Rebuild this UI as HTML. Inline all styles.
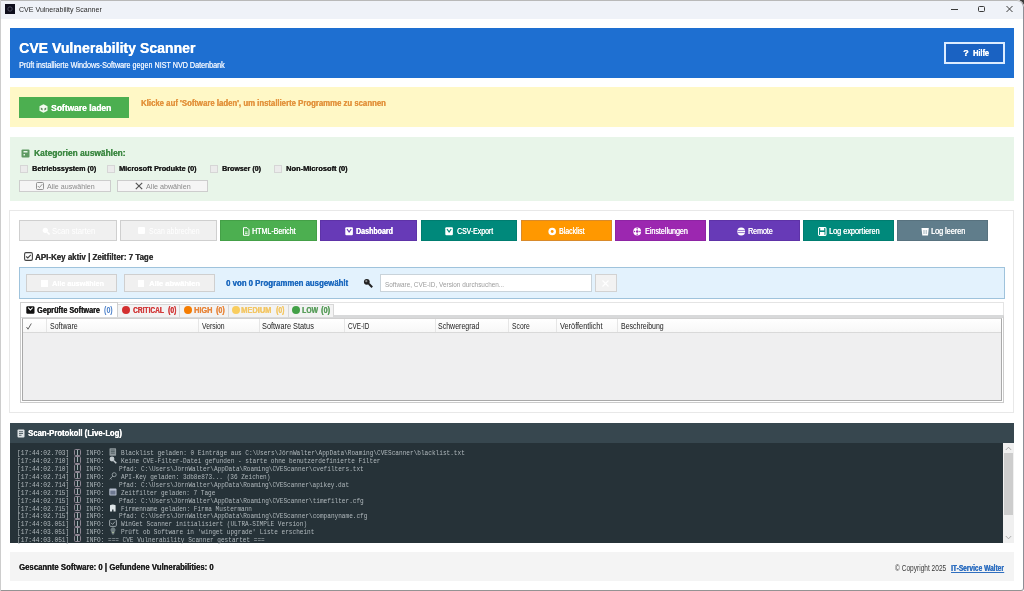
<!DOCTYPE html>
<html><head><meta charset="utf-8">
<style>
*{margin:0;padding:0;box-sizing:border-box}
html,body{width:1024px;height:591px;overflow:hidden;background:#3a3a3a}
#win{position:absolute;left:0;top:0;width:1024px;height:591px;background:#fff;overflow:hidden;border-top-right-radius:7px}
#bd{position:absolute;left:0;top:0;width:1024px;height:591px;border:1px solid #cdcdcd;border-top-color:#b8b8b8;border-right:1px solid #8e8e96;border-bottom:1px solid #939393;border-bottom-right-radius:3px;border-top-right-radius:7px;pointer-events:none}
.a{position:absolute}
.t{position:absolute;white-space:pre;line-height:1;transform-origin:0 0}
.sans{font-family:"Liberation Sans",sans-serif}
.mono{font-family:"Liberation Mono",monospace}
</style></head><body>
<div id="win">
<div class="a" style="left:0px;top:0px;width:1024px;height:18.5px;background:#eff2f8"></div>
<svg class="a" style="left:5px;top:4px" width="10" height="10" viewBox="0 0 10 10"><rect width="10" height="10" fill="#0e0e1c"/><circle cx="5" cy="5" r="2.2" fill="none" stroke="#5a5a70" stroke-width="0.8"/></svg>
<div class="t sans" style="left:18.90px;top:6.00px;font-size:7.85px;color:#2a2a2a;transform:scaleX(0.8981);">CVE Vulnerability Scanner</div>
<div class="a" style="left:951px;top:9px;width:6.5px;height:1px;background:#3a3a3a"></div>
<div class="a" style="left:978px;top:6px;width:7px;height:6px;border:1px solid #3a3a3a;border-radius:1.5px"></div>
<svg class="a" style="left:1006px;top:6px" width="7" height="6" viewBox="0 0 7 6"><path d="M0.5 0 L6.5 6 M6.5 0 L0.5 6" stroke="#3a3a3a" stroke-width="1"/></svg>
<div class="a" style="left:10px;top:28px;width:1004px;height:50px;background:#1e6fd1"></div>
<div class="t sans" style="left:19.00px;top:40.00px;font-size:15.55px;font-weight:bold;text-shadow:0.3px 0 0 #ffffff;color:#ffffff;transform:scaleX(0.9058);">CVE Vulnerability Scanner</div>
<div class="t sans" style="left:19.00px;top:62.00px;font-size:8.14px;text-shadow:0.15px 0 0 #e6effc;color:#e6effc;transform:scaleX(0.8848);">Prüft installierte Windows-Software gegen NIST NVD Datenbank</div>
<div class="a" style="left:944px;top:42px;width:61px;height:22px;background:#1a62c2;border:2px solid #dcecff"></div>
<div class="t sans" style="left:963.10px;top:49.00px;font-size:8.43px;font-weight:bold;text-shadow:0.3px 0 0 #ffffff;color:#ffffff;transform:scaleX(1.1000);">?</div>
<div class="t sans" style="left:973.00px;top:49.00px;font-size:8.43px;font-weight:bold;text-shadow:0.3px 0 0 #ffffff;color:#ffffff;transform:scaleX(0.8725);">Hilfe</div>
<div class="a" style="left:10px;top:87px;width:1004px;height:40px;background:#fff8c6"></div>
<div class="a" style="left:19px;top:97px;width:110px;height:21px;background:#4caf50"></div>
<svg class="a" style="left:38.5px;top:103.8px" width="9" height="9" viewBox="0 0 9 9"><path d="M4.5 0.2 L8.5 2.3 L8.5 6.7 L4.5 8.8 L0.5 6.7 L0.5 2.3 Z" fill="#f2fbef"/><path d="M1.8 3.4 L3.6 4.4 L3.6 6.6 L1.8 5.6 Z M7.2 3.4 L5.4 4.4 L5.4 6.6 L7.2 5.6 Z" fill="#5a8a5c"/></svg>
<div class="t sans" style="left:51.30px;top:104.00px;font-size:8.87px;font-weight:bold;text-shadow:0.3px 0 0 #ffffff;color:#ffffff;transform:scaleX(0.9552);">Software laden</div>
<div class="t sans" style="left:141.30px;top:99.00px;font-size:8.72px;font-weight:bold;text-shadow:0.3px 0 0 #e3953f;color:#e3953f;transform:scaleX(0.8914);">Klicke auf 'Software laden', um installierte Programme zu scannen</div>
<div class="a" style="left:10px;top:137px;width:1004px;height:64px;background:#e8f5e9"></div>
<svg class="a" style="left:21px;top:149px" width="9" height="9" viewBox="0 0 9 9"><rect x="0.5" y="0.5" width="8" height="8" rx="1" fill="#5f9a63"/><rect x="2.5" y="2" width="4" height="1.5" fill="#e8f5e9"/><rect x="2.5" y="5" width="1.5" height="1.5" fill="#e8f5e9"/></svg>
<div class="t sans" style="left:33.90px;top:149.00px;font-size:8.43px;font-weight:bold;text-shadow:0.3px 0 0 #3f8a45;color:#3f8a45;transform:scaleX(0.9914);">Kategorien auswählen:</div>
<div class="a" style="left:20px;top:165px;width:8px;height:8px;background:#ebebeb;border:1px solid #d6d6d6"></div>
<div class="t sans" style="left:32.00px;top:165.00px;font-size:7.7px;font-weight:bold;text-shadow:0.3px 0 0 #1e1e1e;color:#1e1e1e;transform:scaleX(0.9317);">Betriebssystem (0)</div>
<div class="a" style="left:107px;top:165px;width:8px;height:8px;background:#ebebeb;border:1px solid #d6d6d6"></div>
<div class="t sans" style="left:119.40px;top:165.00px;font-size:7.7px;font-weight:bold;text-shadow:0.3px 0 0 #1e1e1e;color:#1e1e1e;transform:scaleX(0.9498);">Microsoft Produkte (0)</div>
<div class="a" style="left:210px;top:165px;width:8px;height:8px;background:#ebebeb;border:1px solid #d6d6d6"></div>
<div class="t sans" style="left:221.90px;top:165.00px;font-size:7.7px;font-weight:bold;text-shadow:0.3px 0 0 #1e1e1e;color:#1e1e1e;transform:scaleX(0.9197);">Browser (0)</div>
<div class="a" style="left:274px;top:165px;width:8px;height:8px;background:#ebebeb;border:1px solid #d6d6d6"></div>
<div class="t sans" style="left:285.80px;top:165.00px;font-size:7.7px;font-weight:bold;text-shadow:0.3px 0 0 #1e1e1e;color:#1e1e1e;transform:scaleX(0.9662);">Non-Microsoft (0)</div>
<div class="a" style="left:19px;top:180px;width:92px;height:12px;background:#f5f5f5;border:1px solid #cdcdcd"></div>
<svg class="a" style="left:36px;top:182px" width="8" height="8" viewBox="0 0 8 8"><rect x="0.5" y="0.5" width="7" height="7" rx="1" fill="none" stroke="#888" stroke-width="0.9"/><path d="M1.8 4 L3.4 5.6 L6.3 2.2" fill="none" stroke="#888" stroke-width="0.9"/></svg>
<div class="t sans" style="left:47.20px;top:183.00px;font-size:7.7px;color:#8a8a8a;transform:scaleX(0.9216);">Alle auswählen</div>
<div class="a" style="left:117px;top:180px;width:91px;height:12px;background:#f5f5f5;border:1px solid #cdcdcd"></div>
<svg class="a" style="left:135px;top:182px" width="8" height="8" viewBox="0 0 8 8"><path d="M0.8 0.8 L7.2 7.2 M7.2 0.8 L0.8 7.2" stroke="#555" stroke-width="1.2"/></svg>
<div class="t sans" style="left:145.70px;top:183.00px;font-size:7.7px;color:#8a8a8a;transform:scaleX(0.9329);">Alle abwählen</div>
<div class="a" style="left:9px;top:210px;width:1005px;height:203px;background:#fff;border:1px solid #e8e8e8"></div>
<div class="a" style="left:19px;top:220px;width:98px;height:21px;background:#f0f0f0;border:1px solid #cfcfcf"></div>
<div class="a" style="left:120px;top:220px;width:97px;height:21px;background:#f0f0f0;border:1px solid #cfcfcf"></div>
<svg class="a" style="left:42px;top:226.5px" width="8" height="8" viewBox="0 0 8 8"><circle cx="3.3" cy="3.3" r="2.6" fill="#fff"/><path d="M5 5 L7.5 7.5" stroke="#fff" stroke-width="1.6"/></svg>
<div class="t sans" style="left:52.20px;top:227.00px;font-size:8.72px;color:#ffffff;transform:scaleX(0.8859);">Scan starten</div>
<div class="a" style="left:137.5px;top:227px;width:7.5px;height:7px;background:#fff;border-radius:1px"></div>
<div class="t sans" style="left:148.90px;top:227.00px;font-size:8.72px;color:#ffffff;transform:scaleX(0.7965);">Scan abbrechen</div>
<div class="a" style="left:220px;top:220px;width:97px;height:21px;background:#4caf50;border:1px solid #44a047"></div>
<svg class="a" style="left:241.5px;top:226.5px" width="9" height="9" viewBox="0 0 9 9"><path d="M1.5 0.7 H5 L7 2.7 V8.3 H1.5 Z" fill="none" stroke="#fff" stroke-width="1"/><path d="M3 5 H5.5 M3 6.5 H5.5" stroke="#fff" stroke-width="0.8"/></svg>
<div class="t sans" style="left:252.20px;top:227.00px;font-size:8.72px;text-shadow:0.2px 0 0 #ffffff;color:#ffffff;transform:scaleX(0.8096);">HTML-Bericht</div>
<div class="a" style="left:320px;top:220px;width:97px;height:21px;background:#673ab7;border:1px solid #5e33a8"></div>
<svg class="a" style="left:345px;top:226.5px" width="9" height="9" viewBox="0 0 9 9"><rect x="0.3" y="0.3" width="7.6" height="8" rx="1" fill="#fff"/><path d="M2 2 L4.1 5 L6.2 2" fill="none" stroke="#673ab7" stroke-width="1.2"/></svg>
<div class="t sans" style="left:356.30px;top:227.00px;font-size:8.72px;font-weight:bold;text-shadow:0.3px 0 0 #ffffff;color:#ffffff;transform:scaleX(0.8095);">Dashboard</div>
<div class="a" style="left:420.5px;top:220px;width:96.7px;height:21px;background:#00897b;border:1px solid #007d70"></div>
<svg class="a" style="left:445.4px;top:226.5px" width="9" height="9" viewBox="0 0 9 9"><rect x="0.3" y="0.3" width="7.6" height="8" rx="1" fill="#fff"/><path d="M2 2 L4.1 5 L6.2 2" fill="none" stroke="#00897b" stroke-width="1.2"/></svg>
<div class="t sans" style="left:456.70px;top:227.00px;font-size:8.72px;text-shadow:0.2px 0 0 #ffffff;color:#ffffff;transform:scaleX(0.7913);">CSV-Export</div>
<div class="a" style="left:521px;top:220px;width:90.7px;height:21px;background:#ff9800;border:1px solid #d98a2a"></div>
<svg class="a" style="left:547.9px;top:226.5px" width="9" height="9" viewBox="0 0 9 9"><circle cx="4.2" cy="4.5" r="3.8" fill="#fff"/><circle cx="4.2" cy="4.5" r="1.4" fill="#ff9800"/></svg>
<div class="t sans" style="left:559.00px;top:227.00px;font-size:8.72px;text-shadow:0.2px 0 0 #ffffff;color:#ffffff;transform:scaleX(0.7987);">Blacklist</div>
<div class="a" style="left:615px;top:220px;width:90.6px;height:21px;background:#9c27b0;border:1px solid #8e24a4"></div>
<svg class="a" style="left:633.4px;top:226.5px" width="9" height="9" viewBox="0 0 9 9"><circle cx="4.2" cy="4.5" r="3.9" fill="#fff"/><circle cx="4.2" cy="4.5" r="1.3" fill="#9c27b0"/><circle cx="4.2" cy="1.8" r="0.7" fill="#9c27b0"/><circle cx="4.2" cy="7.2" r="0.7" fill="#9c27b0"/><circle cx="1.5" cy="4.5" r="0.7" fill="#9c27b0"/><circle cx="6.9" cy="4.5" r="0.7" fill="#9c27b0"/></svg>
<div class="t sans" style="left:644.80px;top:227.00px;font-size:8.72px;text-shadow:0.2px 0 0 #ffffff;color:#ffffff;transform:scaleX(0.8171);">Einstellungen</div>
<div class="a" style="left:709px;top:220px;width:91px;height:21px;background:#673ab7;border:1px solid #5e33a8"></div>
<svg class="a" style="left:737px;top:226.5px" width="9" height="9" viewBox="0 0 9 9"><circle cx="4.2" cy="4.5" r="3.9" fill="#fff"/><path d="M0.6 3.4 H7.8 M0.6 5.6 H7.8" stroke="#673ab7" stroke-width="0.7"/></svg>
<div class="t sans" style="left:747.70px;top:227.00px;font-size:8.72px;text-shadow:0.2px 0 0 #ffffff;color:#ffffff;transform:scaleX(0.8084);">Remote</div>
<div class="a" style="left:803px;top:220px;width:90.8px;height:21px;background:#00897b;border:1px solid #007d70"></div>
<svg class="a" style="left:818px;top:226.5px" width="9" height="9" viewBox="0 0 9 9"><rect x="0.5" y="0.5" width="7.5" height="8" rx="1.2" fill="none" stroke="#fff" stroke-width="1.1"/><rect x="2.2" y="0.8" width="4" height="2.6" fill="#fff"/><rect x="2" y="5" width="4.5" height="3" fill="#fff"/></svg>
<div class="t sans" style="left:829.30px;top:227.00px;font-size:8.72px;text-shadow:0.2px 0 0 #ffffff;color:#ffffff;transform:scaleX(0.8347);">Log exportieren</div>
<div class="a" style="left:897px;top:220px;width:91px;height:21px;background:#607d8b;border:1px solid #58727f"></div>
<svg class="a" style="left:921px;top:226.5px" width="9" height="9" viewBox="0 0 9 9"><path d="M0.5 1 H7.8 L7 8.5 H1.3 Z" fill="#fff"/><path d="M3 3 V7 M5.2 3 V7" stroke="#607d8b" stroke-width="0.6"/></svg>
<div class="t sans" style="left:931.25px;top:227.00px;font-size:8.72px;text-shadow:0.2px 0 0 #ffffff;color:#ffffff;transform:scaleX(0.8306);">Log leeren</div>
<svg class="a" style="left:23.5px;top:251.5px" width="9" height="9" viewBox="0 0 9 9"><rect x="0.6" y="0.6" width="7.8" height="7.8" rx="1.3" fill="none" stroke="#444" stroke-width="1.1"/><path d="M2.2 4.5 L3.8 6 L6.8 2.8" fill="none" stroke="#444" stroke-width="1.1"/></svg>
<div class="t sans" style="left:35.30px;top:253.00px;font-size:9.01px;font-weight:bold;text-shadow:0.3px 0 0 #333333;color:#333333;transform:scaleX(0.8821);">API-Key aktiv | Zeitfilter: 7 Tage</div>
<div class="a" style="left:19px;top:267px;width:986px;height:32px;background:#e3f2fd;border:1px solid #9fc3dc"></div>
<div class="a" style="left:26px;top:274px;width:91px;height:18px;background:#f0f0f0;border:1px solid #cfcfcf"></div>
<div class="a" style="left:123.5px;top:274px;width:91px;height:18px;background:#f0f0f0;border:1px solid #cfcfcf"></div>
<div class="a" style="left:41px;top:279.5px;width:6.5px;height:7px;background:#fff"></div>
<div class="t sans" style="left:52.00px;top:280.00px;font-size:7.99px;font-weight:bold;text-shadow:0.3px 0 0 #ffffff;color:#ffffff;transform:scaleX(0.8995);">Alle auswählen</div>
<div class="a" style="left:137.5px;top:280px;width:6.5px;height:6.5px;background:#fff"></div>
<div class="a" style="left:137.5px;top:280px;width:6.5px;height:6.5px;background:#fff"></div>
<div class="t sans" style="left:149.00px;top:280.00px;font-size:7.99px;font-weight:bold;text-shadow:0.3px 0 0 #ffffff;color:#ffffff;transform:scaleX(0.9557);">Alle abwählen</div>
<div class="t sans" style="left:226.40px;top:279.00px;font-size:8.43px;font-weight:bold;text-shadow:0.3px 0 0 #1f6bbf;color:#1f6bbf;transform:scaleX(0.9278);">0 von 0 Programmen ausgewählt</div>
<svg class="a" style="left:363px;top:278px" width="10" height="10" viewBox="0 0 10 10"><circle cx="3.8" cy="3.8" r="2.9" fill="#222"/><circle cx="3.3" cy="3.2" r="1.1" fill="#888"/><path d="M5.8 5.8 L9.2 9.2" stroke="#222" stroke-width="2"/></svg>
<div class="a" style="left:379.5px;top:274px;width:212.5px;height:18px;background:#fff;border:1px solid #c9d3da"></div>
<div class="t sans" style="left:385.20px;top:281.00px;font-size:6.98px;color:#9c9c9c;transform:scaleX(0.9182);">Software, CVE-ID, Version durchsuchen...</div>
<div class="a" style="left:595px;top:274px;width:21.5px;height:18px;background:#f2f2f2;border:1px solid #d2d2d2"></div>
<svg class="a" style="left:602px;top:279.5px" width="7" height="7" viewBox="0 0 7 7"><path d="M0.5 0.5 L6.5 6.5 M6.5 0.5 L0.5 6.5" stroke="#fff" stroke-width="1.2"/></svg>
<div class="a" style="left:20px;top:302px;width:984px;height:101px;border:1px solid #e4e4e4;background:#fff"></div>
<div class="a" style="left:20px;top:315px;width:984px;height:88px;background:#fff;border:1px solid #cbcbcb;border-top:3px solid #d8d9da"></div>
<div class="a" style="left:22px;top:318px;width:980px;height:83px;background:#efeff0;border:1px solid #a9a9a9;border-top:1px solid #d0d0d0"></div>
<div class="a" style="left:23px;top:319px;width:978px;height:14px;background:linear-gradient(#ffffff,#f7f7f7);border-bottom:1px solid #d9d9d9"></div>
<div class="a" style="left:46px;top:319px;width:1px;height:13px;background:#e6e6e6"></div>
<div class="a" style="left:198px;top:319px;width:1px;height:13px;background:#e6e6e6"></div>
<div class="a" style="left:258.5px;top:319px;width:1px;height:13px;background:#e6e6e6"></div>
<div class="a" style="left:344px;top:319px;width:1px;height:13px;background:#e6e6e6"></div>
<div class="a" style="left:434.5px;top:319px;width:1px;height:13px;background:#e6e6e6"></div>
<div class="a" style="left:508px;top:319px;width:1px;height:13px;background:#e6e6e6"></div>
<div class="a" style="left:556px;top:319px;width:1px;height:13px;background:#e6e6e6"></div>
<div class="a" style="left:617px;top:319px;width:1px;height:13px;background:#e6e6e6"></div>
<svg class="a" style="left:25.5px;top:322.5px" width="6" height="7" viewBox="0 0 6 7"><path d="M0.5 4 L2 6.2 L5.3 0.5" fill="none" stroke="#555" stroke-width="0.9"/></svg>
<div class="t sans" style="left:49.90px;top:322.00px;font-size:8.43px;color:#222222;transform:scaleX(0.8316);">Software</div>
<div class="t sans" style="left:202.10px;top:322.00px;font-size:8.43px;color:#222222;transform:scaleX(0.8062);">Version</div>
<div class="t sans" style="left:262.30px;top:322.00px;font-size:8.43px;color:#222222;transform:scaleX(0.8727);">Software Status</div>
<div class="t sans" style="left:347.70px;top:322.00px;font-size:8.43px;color:#222222;transform:scaleX(0.7484);">CVE-ID</div>
<div class="t sans" style="left:438.20px;top:322.00px;font-size:8.43px;color:#222222;transform:scaleX(0.8350);">Schweregrad</div>
<div class="t sans" style="left:511.60px;top:322.00px;font-size:8.43px;color:#222222;transform:scaleX(0.8021);">Score</div>
<div class="t sans" style="left:560.00px;top:322.00px;font-size:8.43px;color:#222222;transform:scaleX(0.8740);">Veröffentlicht</div>
<div class="t sans" style="left:621.00px;top:322.00px;font-size:8.43px;color:#222222;transform:scaleX(0.8298);">Beschreibung</div>
<div class="a" style="left:117px;top:304px;width:63px;height:12.5px;background:#f3f3f3;border:1px solid #d8d8d8;border-bottom:none"></div>
<div class="a" style="left:179px;top:304px;width:50px;height:12.5px;background:#f3f3f3;border:1px solid #d8d8d8;border-bottom:none"></div>
<div class="a" style="left:228px;top:304px;width:61px;height:12.5px;background:#f3f3f3;border:1px solid #d8d8d8;border-bottom:none"></div>
<div class="a" style="left:288px;top:304px;width:46px;height:12.5px;background:#f3f3f3;border:1px solid #d8d8d8;border-bottom:none"></div>
<div class="a" style="left:20px;top:302px;width:98px;height:14.5px;background:#ffffff;border:1px solid #d0d0d0;border-bottom:none"></div>
<svg class="a" style="left:26px;top:306px" width="9" height="8" viewBox="0 0 9 8"><rect x="0.3" y="0.3" width="8.2" height="7.4" rx="1.2" fill="#111"/><path d="M2.2 1.6 L4.4 4 L6.6 1.6" fill="none" stroke="#fff" stroke-width="1.1"/></svg>
<div class="t sans" style="left:37.10px;top:306.00px;font-size:8.58px;font-weight:bold;text-shadow:0.3px 0 0 #222222;color:#222222;transform:scaleX(0.8460);">Geprüfte Software</div>
<div class="t sans" style="left:104.00px;top:306.00px;font-size:8.43px;font-weight:bold;color:#4a7fc8;transform:scaleX(0.8486);">(0)</div>
<div class="a" style="left:121.50px;top:305.9px;width:8.3px;height:8.3px;border-radius:50%;background:#d32f2f"></div>
<div class="t sans" style="left:132.60px;top:306.00px;font-size:8.43px;font-weight:bold;text-shadow:0.3px 0 0 #d23b3b;color:#d23b3b;transform:scaleX(0.7841);">CRITICAL</div>
<div class="t sans" style="left:167.50px;top:306.00px;font-size:8.43px;font-weight:bold;text-shadow:0.3px 0 0 #d23b3b;color:#d23b3b;transform:scaleX(0.7914);">(0)</div>
<div class="a" style="left:183.65px;top:305.9px;width:8.3px;height:8.3px;border-radius:50%;background:#f57c00"></div>
<div class="t sans" style="left:193.60px;top:306.00px;font-size:8.43px;font-weight:bold;text-shadow:0.3px 0 0 #e8873d;color:#e8873d;transform:scaleX(0.8726);">HIGH</div>
<div class="t sans" style="left:215.70px;top:306.00px;font-size:8.43px;font-weight:bold;text-shadow:0.3px 0 0 #e8873d;color:#e8873d;transform:scaleX(0.8390);">(0)</div>
<div class="a" style="left:231.75px;top:305.9px;width:8.3px;height:8.3px;border-radius:50%;background:#f9cd5e"></div>
<div class="t sans" style="left:241.40px;top:306.00px;font-size:8.43px;font-weight:bold;text-shadow:0.3px 0 0 #f3c766;color:#f3c766;transform:scaleX(0.8876);">MEDIUM</div>
<div class="t sans" style="left:275.50px;top:306.00px;font-size:8.43px;font-weight:bold;text-shadow:0.3px 0 0 #f3c766;color:#f3c766;transform:scaleX(0.8104);">(0)</div>
<div class="a" style="left:291.85px;top:305.9px;width:8.3px;height:8.3px;border-radius:50%;background:#43a047"></div>
<div class="t sans" style="left:302.00px;top:306.00px;font-size:8.43px;font-weight:bold;text-shadow:0.3px 0 0 #5a9e5c;color:#5a9e5c;transform:scaleX(0.8073);">LOW</div>
<div class="t sans" style="left:321.20px;top:306.00px;font-size:8.43px;font-weight:bold;text-shadow:0.3px 0 0 #5a9e5c;color:#5a9e5c;transform:scaleX(0.8676);">(0)</div>
<div class="a" style="left:10px;top:422.5px;width:1003.5px;height:20px;background:#37474f"></div>
<svg class="a" style="left:17px;top:428.5px" width="8" height="9" viewBox="0 0 8 9"><rect x="0.5" y="0.5" width="7" height="8" rx="1" fill="#dfe4e6"/><path d="M2 2.7 H6 M2 4.5 H6 M2 6.3 H4.5" stroke="#37474f" stroke-width="0.8"/></svg>
<div class="t sans" style="left:28.40px;top:430.00px;font-size:8.14px;font-weight:bold;text-shadow:0.3px 0 0 #ffffff;color:#ffffff;transform:scaleX(0.9491);">Scan-Protokoll (Live-Log)</div>
<div class="a" style="left:10px;top:442.5px;width:993px;height:100px;background:#263238"></div>
<div class="a" style="left:1003px;top:442.5px;width:10.5px;height:100px;background:#f0f0f0"></div>
<div class="a" style="left:1004px;top:453px;width:8.5px;height:61.5px;background:#cdcdcd"></div>
<svg class="a" style="left:1005px;top:446px" width="7" height="5" viewBox="0 0 7 5"><path d="M0.8 4 L3.5 1.2 L6.2 4" fill="none" stroke="#9a9a9a" stroke-width="0.8"/></svg>
<svg class="a" style="left:1005px;top:535px" width="7" height="5" viewBox="0 0 7 5"><path d="M0.8 1 L3.5 3.8 L6.2 1" fill="none" stroke="#9a9a9a" stroke-width="0.8"/></svg>
<div class="t mono" style="left:17.21px;top:450.00px;font-size:6.98px;color:#b0b8bc;transform:scaleX(0.8942);">[17:44:02.703]</div>
<div class="a" style="left:73.5px;top:448.50px;width:7.3px;height:7.3px;border:1px solid #8f8794;border-radius:1.5px"></div>
<div class="a" style="left:76.6px;top:449.60px;width:1.1px;height:5px;background:#9fb3b3"></div>
<div class="t mono" style="left:85.70px;top:450.00px;font-size:6.98px;color:#b0b8bc;transform:scaleX(0.8820);">INFO:</div>
<svg class="a" style="left:108.5px;top:448.40px" width="8" height="8" viewBox="0 0 8 8"><rect x="0.5" y="0.3" width="6.6" height="7.4" rx="0.6" fill="#8e989c"/><path d="M1.8 2 H5.8 M1.8 3.6 H5.8 M1.8 5.2 H5.8" stroke="#3d4a50" stroke-width="0.7"/></svg>
<div class="t mono" style="left:120.60px;top:450.00px;font-size:6.98px;color:#b0b8bc;transform:scaleX(0.8747);">Blacklist geladen: 0 Einträge aus C:\Users\JörnWalter\AppData\Roaming\CVEScanner\blacklist.txt</div>
<div class="t mono" style="left:17.21px;top:458.00px;font-size:6.98px;color:#b0b8bc;transform:scaleX(0.8942);">[17:44:02.710]</div>
<div class="a" style="left:73.5px;top:456.38px;width:7.3px;height:7.3px;border:1px solid #8f8794;border-radius:1.5px"></div>
<div class="a" style="left:76.6px;top:457.48px;width:1.1px;height:5px;background:#9fb3b3"></div>
<div class="t mono" style="left:85.70px;top:458.00px;font-size:6.98px;color:#b0b8bc;transform:scaleX(0.8820);">INFO:</div>
<svg class="a" style="left:108.5px;top:456.28px" width="8" height="8" viewBox="0 0 8 8"><circle cx="3" cy="3" r="2.4" fill="#c5cdd1"/><path d="M4.5 4.5 L7.3 7.3" stroke="#c5cdd1" stroke-width="1.5"/></svg>
<div class="t mono" style="left:120.60px;top:458.00px;font-size:6.98px;color:#b0b8bc;transform:scaleX(0.8738);">Keine CVE-Filter-Datei gefunden - starte ohne benutzerdefinierte Filter</div>
<div class="t mono" style="left:17.21px;top:466.00px;font-size:6.98px;color:#b0b8bc;transform:scaleX(0.8942);">[17:44:02.710]</div>
<div class="a" style="left:73.5px;top:464.26px;width:7.3px;height:7.3px;border:1px solid #8f8794;border-radius:1.5px"></div>
<div class="a" style="left:76.6px;top:465.36px;width:1.1px;height:5px;background:#9fb3b3"></div>
<div class="t mono" style="left:85.70px;top:466.00px;font-size:6.98px;color:#b0b8bc;transform:scaleX(0.8820);">INFO:</div>
<div class="t mono" style="left:118.90px;top:466.00px;font-size:6.98px;color:#b0b8bc;transform:scaleX(0.8736);">Pfad: C:\Users\JörnWalter\AppData\Roaming\CVEScanner\cvefilters.txt</div>
<div class="t mono" style="left:17.21px;top:474.00px;font-size:6.98px;color:#b0b8bc;transform:scaleX(0.8942);">[17:44:02.714]</div>
<div class="a" style="left:73.5px;top:472.14px;width:7.3px;height:7.3px;border:1px solid #8f8794;border-radius:1.5px"></div>
<div class="a" style="left:76.6px;top:473.24px;width:1.1px;height:5px;background:#9fb3b3"></div>
<div class="t mono" style="left:85.70px;top:474.00px;font-size:6.98px;color:#b0b8bc;transform:scaleX(0.8820);">INFO:</div>
<svg class="a" style="left:108.5px;top:472.04px" width="8" height="8" viewBox="0 0 8 8"><circle cx="5.2" cy="2.7" r="2" fill="none" stroke="#9aa4a8" stroke-width="0.9"/><path d="M3.8 4.1 L0.7 7.3 M1.6 6.4 L2.6 7.3" stroke="#9aa4a8" stroke-width="0.9"/></svg>
<div class="t mono" style="left:120.60px;top:474.00px;font-size:6.98px;color:#b0b8bc;transform:scaleX(0.8710);">API-Key geladen: 3db8e873... (36 Zeichen)</div>
<div class="t mono" style="left:17.21px;top:482.00px;font-size:6.98px;color:#b0b8bc;transform:scaleX(0.8942);">[17:44:02.714]</div>
<div class="a" style="left:73.5px;top:480.02px;width:7.3px;height:7.3px;border:1px solid #8f8794;border-radius:1.5px"></div>
<div class="a" style="left:76.6px;top:481.12px;width:1.1px;height:5px;background:#9fb3b3"></div>
<div class="t mono" style="left:85.70px;top:482.00px;font-size:6.98px;color:#b0b8bc;transform:scaleX(0.8820);">INFO:</div>
<div class="t mono" style="left:118.90px;top:482.00px;font-size:6.98px;color:#b0b8bc;transform:scaleX(0.8733);">Pfad: C:\Users\JörnWalter\AppData\Roaming\CVEScanner\apikey.dat</div>
<div class="t mono" style="left:17.21px;top:490.00px;font-size:6.98px;color:#b0b8bc;transform:scaleX(0.8942);">[17:44:02.715]</div>
<div class="a" style="left:73.5px;top:487.90px;width:7.3px;height:7.3px;border:1px solid #8f8794;border-radius:1.5px"></div>
<div class="a" style="left:76.6px;top:489.00px;width:1.1px;height:5px;background:#9fb3b3"></div>
<div class="t mono" style="left:85.70px;top:490.00px;font-size:6.98px;color:#b0b8bc;transform:scaleX(0.8820);">INFO:</div>
<svg class="a" style="left:108.5px;top:487.80px" width="8" height="8" viewBox="0 0 8 8"><rect x="0.3" y="0.6" width="7.2" height="7" rx="0.8" fill="#b7bfcf"/><rect x="1.3" y="2.6" width="5.2" height="4" fill="#6d7890"/></svg>
<div class="t mono" style="left:120.60px;top:490.00px;font-size:6.98px;color:#b0b8bc;transform:scaleX(0.8672);">Zeitfilter geladen: 7 Tage</div>
<div class="t mono" style="left:17.21px;top:498.00px;font-size:6.98px;color:#b0b8bc;transform:scaleX(0.8942);">[17:44:02.715]</div>
<div class="a" style="left:73.5px;top:495.78px;width:7.3px;height:7.3px;border:1px solid #8f8794;border-radius:1.5px"></div>
<div class="a" style="left:76.6px;top:496.88px;width:1.1px;height:5px;background:#9fb3b3"></div>
<div class="t mono" style="left:85.70px;top:498.00px;font-size:6.98px;color:#b0b8bc;transform:scaleX(0.8820);">INFO:</div>
<div class="t mono" style="left:118.90px;top:498.00px;font-size:6.98px;color:#b0b8bc;transform:scaleX(0.8736);">Pfad: C:\Users\JörnWalter\AppData\Roaming\CVEScanner\timefilter.cfg</div>
<div class="t mono" style="left:17.21px;top:506.00px;font-size:6.98px;color:#b0b8bc;transform:scaleX(0.8942);">[17:44:02.715]</div>
<div class="a" style="left:73.5px;top:503.66px;width:7.3px;height:7.3px;border:1px solid #8f8794;border-radius:1.5px"></div>
<div class="a" style="left:76.6px;top:504.76px;width:1.1px;height:5px;background:#9fb3b3"></div>
<div class="t mono" style="left:85.70px;top:506.00px;font-size:6.98px;color:#b0b8bc;transform:scaleX(0.8820);">INFO:</div>
<svg class="a" style="left:108.5px;top:503.56px" width="8" height="8" viewBox="0 0 8 8"><path d="M1 7.6 V1.2 Q3.8 -0.2 6.6 1.2 V7.6 H4.5 V5.4 H3.1 V7.6 Z" fill="#dfe5e8"/></svg>
<div class="t mono" style="left:120.60px;top:506.00px;font-size:6.98px;color:#b0b8bc;transform:scaleX(0.8701);">Firmenname geladen: Firma Mustermann</div>
<div class="t mono" style="left:17.21px;top:513.00px;font-size:6.98px;color:#b0b8bc;transform:scaleX(0.8942);">[17:44:02.715]</div>
<div class="a" style="left:73.5px;top:511.54px;width:7.3px;height:7.3px;border:1px solid #8f8794;border-radius:1.5px"></div>
<div class="a" style="left:76.6px;top:512.64px;width:1.1px;height:5px;background:#9fb3b3"></div>
<div class="t mono" style="left:85.70px;top:513.00px;font-size:6.98px;color:#b0b8bc;transform:scaleX(0.8820);">INFO:</div>
<div class="t mono" style="left:118.90px;top:513.00px;font-size:6.98px;color:#b0b8bc;transform:scaleX(0.8736);">Pfad: C:\Users\JörnWalter\AppData\Roaming\CVEScanner\companyname.cfg</div>
<div class="t mono" style="left:17.21px;top:521.00px;font-size:6.98px;color:#b0b8bc;transform:scaleX(0.8942);">[17:44:03.051]</div>
<div class="a" style="left:73.5px;top:519.42px;width:7.3px;height:7.3px;border:1px solid #8f8794;border-radius:1.5px"></div>
<div class="a" style="left:76.6px;top:520.52px;width:1.1px;height:5px;background:#9fb3b3"></div>
<div class="t mono" style="left:85.70px;top:521.00px;font-size:6.98px;color:#b0b8bc;transform:scaleX(0.8820);">INFO:</div>
<svg class="a" style="left:108.5px;top:519.32px" width="8" height="8" viewBox="0 0 8 8"><rect x="0.6" y="0.6" width="6.8" height="6.8" rx="1.2" fill="none" stroke="#a3acb0" stroke-width="0.9"/><path d="M2 3.8 L3.6 5.4 L6 2.6" fill="none" stroke="#a3acb0" stroke-width="0.9"/></svg>
<div class="t mono" style="left:120.60px;top:521.00px;font-size:6.98px;color:#b0b8bc;transform:scaleX(0.8723);">WinGet Scanner initialisiert (ULTRA-SIMPLE Version)</div>
<div class="t mono" style="left:17.21px;top:529.00px;font-size:6.98px;color:#b0b8bc;transform:scaleX(0.8942);">[17:44:03.051]</div>
<div class="a" style="left:73.5px;top:527.30px;width:7.3px;height:7.3px;border:1px solid #8f8794;border-radius:1.5px"></div>
<div class="a" style="left:76.6px;top:528.40px;width:1.1px;height:5px;background:#9fb3b3"></div>
<div class="t mono" style="left:85.70px;top:529.00px;font-size:6.98px;color:#b0b8bc;transform:scaleX(0.8820);">INFO:</div>
<svg class="a" style="left:108.5px;top:527.20px" width="8" height="8" viewBox="0 0 8 8"><path d="M2.2 4.8 Q0.6 2.6 2.4 0.9 Q4 -0.2 5.6 0.9 Q7.4 2.6 5.8 4.8 L5 7.6 H3 Z" fill="#6f7c80"/><path d="M3 5.4 H5" stroke="#b5c7a0" stroke-width="0.8"/></svg>
<div class="t mono" style="left:120.60px;top:529.00px;font-size:6.98px;color:#b0b8bc;transform:scaleX(0.8725);">Prüft ob Software in 'winget upgrade' Liste erscheint</div>
<div class="t mono" style="left:17.21px;top:537.00px;font-size:6.98px;color:#b0b8bc;transform:scaleX(0.8942);">[17:44:03.051]</div>
<div class="a" style="left:73.5px;top:535.18px;width:7.3px;height:7.3px;border:1px solid #8f8794;border-radius:1.5px"></div>
<div class="a" style="left:76.6px;top:536.28px;width:1.1px;height:5px;background:#9fb3b3"></div>
<div class="t mono" style="left:85.70px;top:537.00px;font-size:6.98px;color:#b0b8bc;transform:scaleX(0.8820);">INFO:</div>
<div class="t mono" style="left:107.70px;top:537.00px;font-size:6.98px;color:#b0b8bc;transform:scaleX(0.8713);">=== CVE Vulnerability Scanner gestartet ===</div>
<div class="a" style="left:10px;top:552.3px;width:1003.5px;height:28.5px;background:#f4f4f4"></div>
<div class="t sans" style="left:18.75px;top:563.00px;font-size:9.16px;font-weight:bold;text-shadow:0.3px 0 0 #222222;color:#222222;transform:scaleX(0.8475);">Gescannte Software: 0 | Gefundene Vulnerabilities: 0</div>
<div class="t sans" style="left:895.20px;top:565.00px;font-size:8.14px;color:#3a3a3a;transform:scaleX(0.8084);">© Copyright 2025</div>
<div class="t sans" style="left:951.40px;top:565.00px;font-size:8.14px;font-weight:bold;text-shadow:0.3px 0 0 #2f6fc0;color:#2f6fc0;transform:scaleX(0.8104);text-decoration:underline;">IT-Service Walter</div>
<div id="bd"></div>
</div>
</body></html>
